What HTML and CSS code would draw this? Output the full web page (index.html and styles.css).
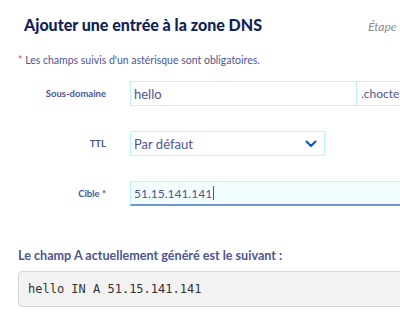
FILE: index.html
```html
<!DOCTYPE html>
<html lang="fr">
<head>
    <meta charset="UTF-8">
    <title>Ajouter une entrée à la zone DNS</title>
    <link rel="stylesheet" href="styles.css">
</head>
<body>
    <div class="modal">
        <div class="header">
            <h2>Ajouter une entrée à la zone DNS</h2>
            <span class="step">Étape 2 sur 3</span>
        </div>

        <p class="note"><span class="req">*</span> Les champs suivis d'un astérisque sont obligatoires.</p>

        <div class="row">
            <label for="subdomain">Sous-domaine</label>
            <div class="input-group">
                <input type="text" id="subdomain" value="hello">
                <span class="addon">.chocteau.ovh</span>
            </div>
        </div>

        <div class="row">
            <label for="ttl">TTL</label>
            <div class="select">
                <span>Par défaut</span>
                <svg width="12" height="8" viewBox="0 0 12 8"><path d="M1.5 1.5 L6 6 L10.5 1.5" fill="none" stroke="#0050d7" stroke-width="2" stroke-linecap="round" stroke-linejoin="round"/></svg>
            </div>
        </div>

        <div class="row">
            <label for="target">Cible *</label>
            <div class="target">51.15.141.141<span class="caret"></span></div>
        </div>

        <h3>Le champ A actuellement généré est le suivant :</h3>
        <pre class="code">hello IN A 51.15.141.141</pre>
    </div>
</body>
</html>
```

FILE: styles.css
```css
body {
    margin: 0;
    font-family: 'Lato', sans-serif;
    background-color: #ffffff;
    color: #4d5592;
    overflow: hidden;
}

.modal {
    width: 520px;
    padding: 15px 0 0 18px;
}

.header {
    display: flex;
    align-items: baseline;
    padding-left: 6px;
}

h2 {
    margin: 0;
    font-size: 16px;
    font-weight: 900;
    color: #0f2358;
    width: 344px;
}

.step {
    font-size: 12px;
    font-style: italic;
    color: #8a8f99;
}

.note {
    margin: 20px 0 0 0;
    font-size: 10.5px;
    color: #4d5592;
}

.req {
    color: #e2445c;
}

.row {
    display: flex;
    align-items: center;
    margin-top: 15px;
}

.row + .row {
    margin-top: 25px;
}

label {
    width: 88px;
    text-align: right;
    font-size: 9.5px;
    font-weight: 700;
    color: #4d5592;
    margin-right: 24px;
}

.input-group {
    display: flex;
}

input[type="text"] {
    width: 226px;
    height: 25px;
    box-sizing: border-box;
    border: 1px solid #bef1ff;
    border-right: none;
    padding: 0 3px;
    font-family: 'Lato', sans-serif;
    font-size: 13px;
    color: #4d5592;
    outline: none;
}

.addon {
    display: flex;
    align-items: center;
    height: 25px;
    box-sizing: border-box;
    border: 1px solid #bef1ff;
    padding: 0 4px;
    font-size: 12px;
    color: #4d5592;
}

.select {
    width: 195px;
    height: 25px;
    box-sizing: border-box;
    border: 1px solid #bef1ff;
    border-radius: 2px;
    display: flex;
    align-items: center;
    justify-content: space-between;
    padding: 0 7px 0 3px;
    font-size: 13px;
}

.target {
    width: 300px;
    height: 25px;
    box-sizing: border-box;
    background-color: #f2fdff;
    border-top: 1px solid #bef1ff;
    border-left: 1px solid #bef1ff;
    border-bottom: 2px solid #6f93e0;
    display: flex;
    align-items: center;
    padding: 0 3px;
    font-size: 12px;
}

.caret {
    display: inline-block;
    width: 1px;
    height: 14px;
    background-color: #4d5592;
    margin-left: 1px;
}

h3 {
    margin: 42px 0 0 0;
    font-size: 12.6px;
    font-weight: 700;
    color: #4d5592;
}

.code {
    margin: 8px 0 0 0;
    width: 400px;
    height: 36px;
    box-sizing: border-box;
    background-color: #f2f2f2;
    border: 1px solid #d6d6d6;
    border-radius: 4px;
    padding: 0 9px;
    display: flex;
    align-items: center;
    font-family: 'DejaVu Sans Mono', monospace;
    font-size: 12px;
    color: #333333;
}
```
